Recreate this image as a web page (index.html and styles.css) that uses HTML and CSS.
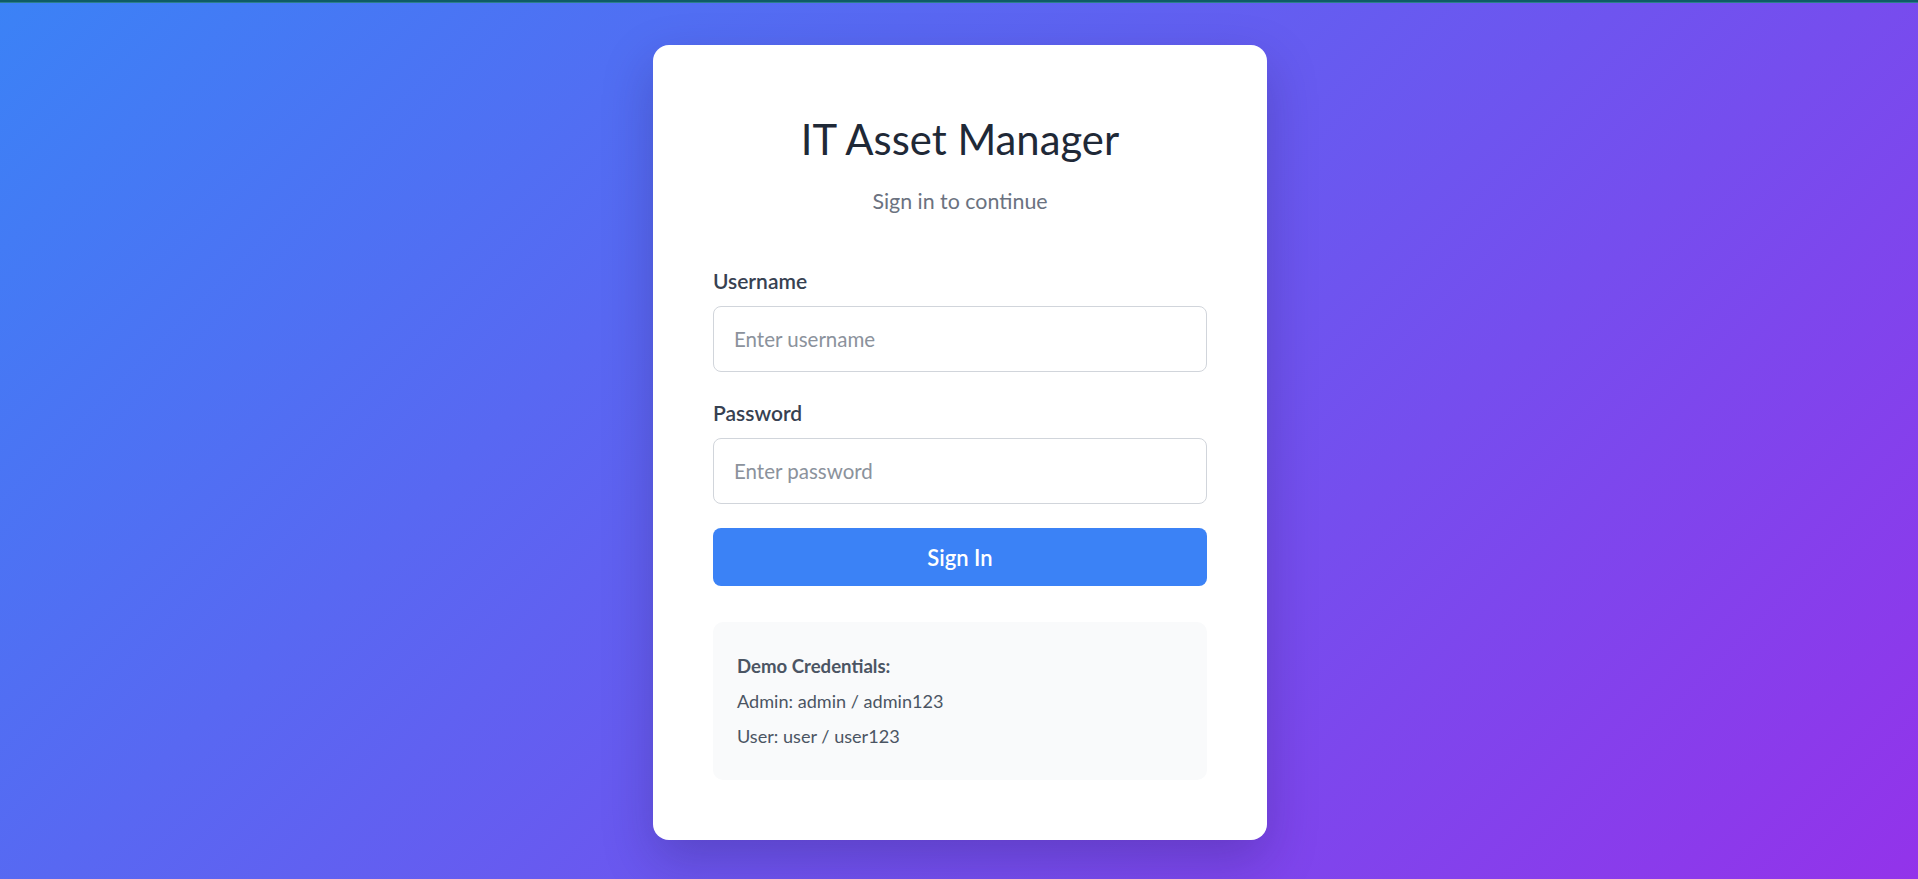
FILE: index.html
```html
<!DOCTYPE html>
<html lang="en">
<head>
<meta charset="utf-8">
<title>IT Asset Manager - Sign in</title>
<link rel="stylesheet" href="styles.css">
</head>
<body>
<div class="topbar"></div>
<main class="page">
  <section class="card">
    <header class="card-header">
      <h1 class="title">IT Asset Manager</h1>
      <p class="subtitle">Sign in to continue</p>
    </header>
    <form class="form">
      <div class="field">
        <label class="label" for="username">Username</label>
        <input class="input" id="username" type="text" placeholder="Enter username">
      </div>
      <div class="field">
        <label class="label" for="password">Password</label>
        <input class="input" id="password" type="password" placeholder="Enter password">
      </div>
      <button class="btn" type="button">Sign In</button>
    </form>
    <div class="demo">
      <p class="demo-title">Demo Credentials:</p>
      <p class="demo-line">Admin: admin / admin123</p>
      <p class="demo-line">User: user / user123</p>
    </div>
  </section>
</main>
</body>
</html>
```

FILE: styles.css
```css
* { box-sizing: border-box; }
html, body { margin: 0; padding: 0; }
body {
  min-height: 100vh;
  font-family: Lato, "Noto Sans", sans-serif;
  background: linear-gradient(135deg, #3b82f6 0%, #9333ea 100%);
  background-attachment: fixed;
}
.topbar {
  height: 3px;
  background: linear-gradient(180deg, #0f5c66 0, #0f5c66 2px, #2b7f8c 2px);
}
.page {
  display: flex;
  justify-content: center;
  padding-top: 42px;
  padding-left: 2px;
}
.card {
  width: 614px;
  background: #ffffff;
  border-radius: 16px;
  padding: 60px;
  box-shadow: 0 20px 50px rgba(30, 20, 80, 0.25);
}
.card-header {
  text-align: center;
  margin-bottom: 49px;
}
.title {
  margin: 0;
  font-size: 41.8px;
  line-height: 68px;
  font-weight: 400;
  color: #1f2937;
}
.subtitle {
  margin: 13px 0 0;
  font-size: 21.4px;
  line-height: 31px;
  color: #6b7280;
}
.form { display: flex; flex-direction: column; }
.field { display: flex; flex-direction: column; margin-bottom: 24px; }
.field:first-child { margin-bottom: 26px; }
.label {
  font-size: 21px;
  line-height: 30px;
  font-weight: 600;
  color: #374151;
  margin-bottom: 10px;
}
.input {
  height: 66px;
  width: 100%;
  padding: 0 20px;
  border: 1px solid #d1d5db;
  border-radius: 8px;
  font-family: inherit;
  font-size: 20.5px;
  color: #1f2937;
  background: #fff;
  outline: none;
}
.input::placeholder { color: #8b929c; }
.btn {
  height: 58px;
  width: 100%;
  border: none;
  border-radius: 8px;
  background: #3b82f6;
  color: #ffffff;
  font-family: inherit;
  font-size: 22px;
  font-weight: 600;
  cursor: pointer;
}
.demo {
  margin-top: 36px;
  background: #f9fafb;
  border-radius: 10px;
  padding: 27px 24px 26px;
  color: #4b5563;
}
.demo-title, .demo-line {
  margin: 0;
  font-size: 18.1px;
  line-height: 35px;
}
.demo-title { font-weight: 700; font-size: 18.6px; }
```
